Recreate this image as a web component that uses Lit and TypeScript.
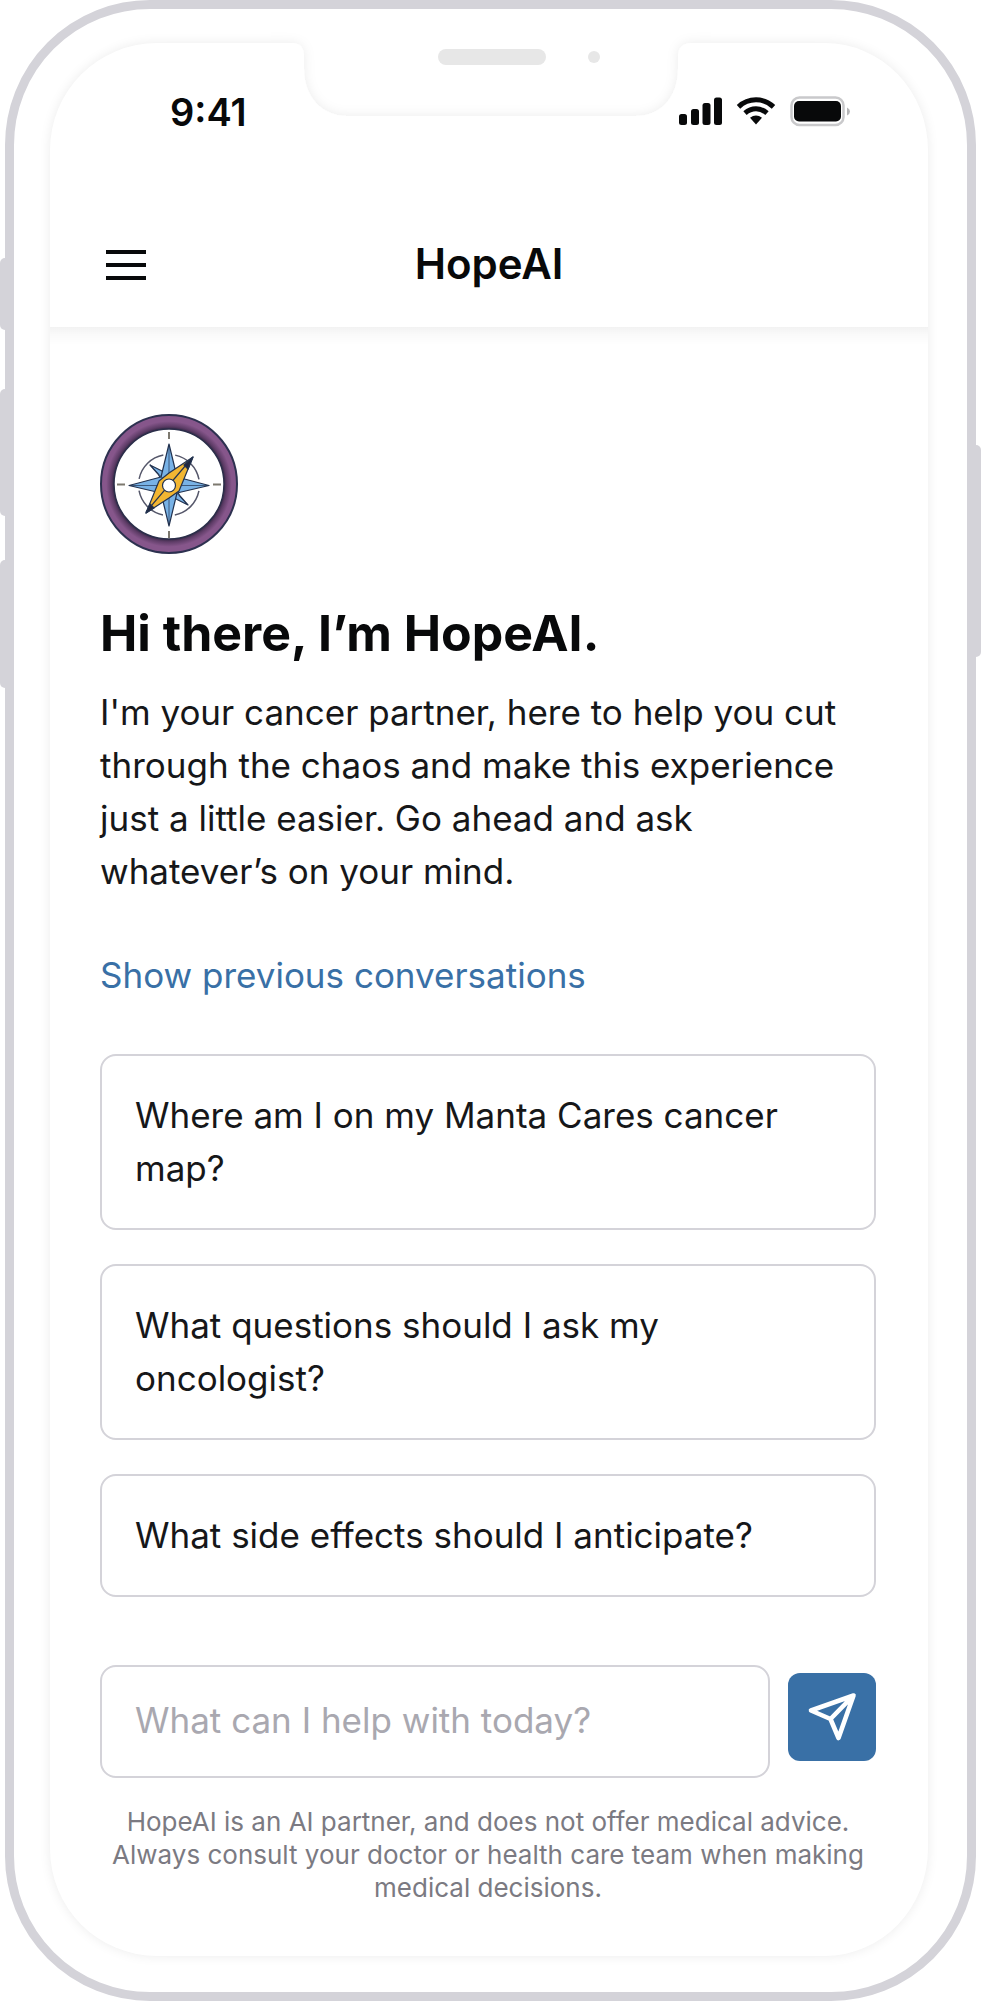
import { LitElement, html, css } from "lit";
import { customElement, state } from "lit/decorators.js";

const SUGGESTIONS = [
  "Where am I on my Manta Cares cancer map?",
  "What questions should I ask my oncologist?",
  "What side effects should I anticipate?",
];

const notch = html`<svg class="notch" viewBox="0 0 440 120" aria-hidden="true">
  <defs>
    <filter id="edge" x="-20%" y="-30%" width="140%" height="160%">
      <feDropShadow dx="0" dy="0" stdDeviation="6" flood-color="#000" flood-opacity="0.08" />
    </filter>
  </defs>
  <rect width="440" height="120" fill="#fff" />
  <path
    filter="url(#edge)"
    fill="#fff"
    d="M-40 34H21Q33 34 33 48V60C33 88 51 107 76 107H365C390 107 407 88 407 60V48Q407 34 421 34H480V160H-40Z"
  />
  <rect x="167" y="40" width="108" height="16" rx="8" fill="#e7e7e7" />
  <circle cx="323" cy="48" r="6" fill="#e7e7e7" />
</svg>`;

const statusIcons = html`<svg width="172" height="32" viewBox="0 0 172 32" aria-hidden="true">
  <g fill="#08090a">
    <rect x="0" y="18" width="8" height="11" rx="2.5" />
    <rect x="12" y="13" width="8" height="16" rx="2.5" />
    <rect x="23.5" y="7" width="8" height="22" rx="2.5" />
    <rect x="35" y="1.5" width="8" height="27.5" rx="2.5" />
    <path d="M77 28.5 71 21.8Q77 17 83 21.8Z" />
  </g>
  <g fill="none" stroke="#08090a" stroke-width="5">
    <path d="M59.5 10.8Q67 3.8 77 3.8T94.500 10.8" />
    <path d="M66 17.2Q71 12.8 77 12.8T88 17.2" />
  </g>
  <rect x="112.5" y="1.5" width="52" height="27.500" rx="8" fill="#fff" stroke="#c9c9cb" stroke-width="2.5" />
  <rect x="115" y="5" width="47" height="20.500" rx="5" fill="#08090a" />
  <path d="M168 11.500v8q3-1.500 3-4t-3-4Z" fill="#b5b5b7" />
</svg>`;

const compass = html`<svg class="compass" width="138" height="140" viewBox="0 0 138 140" role="img" aria-label="Compass">
  <defs>
    <radialGradient id="ring" gradientUnits="userSpaceOnUse" cx="69" cy="70" r="69">
      <stop offset="0.8" stop-color="#3a2a49" />
      <stop offset="0.84" stop-color="#5f3d68" />
      <stop offset="0.91" stop-color="#86568b" />
      <stop offset="1" stop-color="#86568b" />
    </radialGradient>
  </defs>
  <ellipse cx="69" cy="70" rx="68" ry="69" fill="url(#ring)" stroke="#2d3150" stroke-width="2" />
  <circle cx="69" cy="70" r="55" fill="#fff" stroke="#2b2e4a" stroke-width="1.5" />
  <circle cx="69" cy="71" r="30.5" fill="none" stroke="#55576a" stroke-width="1.5" stroke-dasharray="36 11.91" stroke-dashoffset="-6" />
  <path d="M69 18v7M69 117v7M17 70.500h8M113 70.500h8" stroke="#7d796f" stroke-width="2" />
  <g stroke="#22324f" stroke-width="1.2" stroke-linejoin="round">
    <path fill="#78b2e6" d="M50 51 66 59 80 82 88 91 72 83 58 60Z" />
    <path fill="#78b2e6" d="M69 30 77 63 109 71.500 77 79 69 112 61 79 29 71.500 61 63Z" />
    <path fill="none" d="M69 32V110M31 71.500H107M50 51 88 91" stroke-width="0.7" />
    <path fill="#f2b632" d="M93 43 79 77 69 84 46 99 59 67 69 59Z" />
    <path fill="none" d="M92 44 46 98" />
    <path fill="#22263c" d="M93 43 84 51 88 55ZM46 99 50 90 54 94Z" />
    <circle cx="69" cy="71.500" r="6.500" fill="#fff" />
  </g>
</svg>`;

@customElement("app-root")
export class AppRoot extends LitElement {
  @state() private draft = "";

  static styles = css`
    :host {
      display: block;
      font-family: Inter, "Liberation Sans", sans-serif;
      color: #08090a;
      background: #fff;
    }
    * {
      box-sizing: border-box;
    }
    button,
    input {
      font: inherit;
      color: inherit;
      margin: 0;
    }
    .device {
      position: relative;
      padding: 0 5px;
    }
    .side-button {
      position: absolute;
      width: 10px;
      border-radius: 5px;
      background: #d4d3d9;
    }
    .mute { left: 0; top: 258px; height: 72px; }
    .volume-up { left: 0; top: 389px; height: 127px; }
    .volume-down { left: 0; top: 560px; height: 128px; }
    .power { right: 0; top: 445px; height: 212px; }
    .frame {
      position: relative;
      padding: 34px 39px 36px 36px;
      border: 9px solid #d4d3d9;
      border-radius: 145px;
      background: #fff;
    }
    .screen {
      position: relative;
      border-radius: 107px 103px 103px 107px / 107px;
      background: #fff;
      box-shadow: 0 0 12px rgba(0, 0, 0, 0.08);
    }
    .notch {
      position: absolute;
      top: -34px;
      left: 50%;
      width: 440px;
      height: 120px;
      margin-left: -218px;
      overflow: hidden;
    }
    .top {
      padding: 47px 56px 39px;
    }
    .status {
      position: relative;
      display: flex;
      justify-content: space-between;
      align-items: center;
      padding: 0 21px 0 64px;
    }
    .time {
      font-size: 38px;
      line-height: 44px;
      font-weight: 600;
    }
    .nav {
      display: grid;
      grid-template-columns: 40px 1fr 40px;
      align-items: center;
      margin-top: 106px;
    }
    .menu {
      display: flex;
      padding: 0;
      border: 0;
      background: none;
    }
    .title {
      margin: 0;
      font-size: 42px;
      line-height: 48px;
      font-weight: 600;
      text-align: center;
    }
    .content {
      padding: 87px 52px 52px 50px;
      border-radius: 0 0 103px 107px;
      background: linear-gradient(rgba(0, 0, 0, 0.05), rgba(0, 0, 0, 0.02) 8px, transparent 18px);
      color: #161719;
      font-size: 35px;
      line-height: 53px;
    }
    .compass {
      display: block;
    }
    .greeting {
      margin: 50px 0 24px;
      color: #08090a;
      font-size: 50px;
      line-height: 58px;
      font-weight: 700;
    }
    .intro {
      margin: 0;
    }
    .history {
      display: block;
      margin: 51px 0 52px;
      color: #3970a6;
      text-decoration: none;
    }
    .suggestions {
      display: grid;
      gap: 34px;
    }
    .suggestion {
      padding: 33px;
      border: 2px solid #d4d3d9;
      border-radius: 16px;
      background: #fff;
      text-align: left;
    }
    .composer {
      display: flex;
      align-items: flex-start;
      gap: 18px;
      margin-top: 68px;
    }
    .prompt {
      flex: 1;
      min-width: 0;
      height: 113px;
      padding: 0 33px 4px;
      border: 2px solid #d4d3d9;
      border-radius: 16px;
      background: #fff;
    }
    .prompt::placeholder {
      color: #a9a8b0;
      opacity: 1;
    }
    .send {
      display: grid;
      place-items: center;
      width: 88px;
      height: 88px;
      margin-top: 8px;
      padding: 0;
      border: 0;
      border-radius: 12px;
      background: #3970a6;
    }
    .disclaimer {
      margin: 27px 0 0;
      font-size: 26px;
      line-height: 33px;
      text-align: center;
      color: #7b7a82;
    }
  `;

  private onInput(event: InputEvent) {
    this.draft = (event.target as HTMLInputElement).value;
  }

  private choose(text: string) {
    this.draft = text;
  }

  render() {
    return html`
      <div class="device">
        <span class="side-button mute"></span>
        <span class="side-button volume-up"></span>
        <span class="side-button volume-down"></span>
        <span class="side-button power"></span>
        <div class="frame">
          <div class="screen">
            ${notch}
            <header class="top">
              <div class="status">
                <span class="time">9:41</span>
                ${statusIcons}
              </div>
              <div class="nav">
                <button class="menu" aria-label="Open menu">
                  <svg width="40" height="32" viewBox="0 0 40 32" aria-hidden="true">
                    <path d="M0 4H40M0 17H40M0 30H40" stroke="#08090a" stroke-width="4" />
                  </svg>
                </button>
                <h2 class="title">HopeAI</h2>
              </div>
            </header>
            <main class="content">
              ${compass}
              <h1 class="greeting">Hi there, I’m HopeAI.</h1>
              <p class="intro">
                I'm your cancer partner, here to help you cut through the chaos and make this
                experience just a little easier. Go ahead and ask whatever’s on your mind.
              </p>
              <a class="history" href="#history">Show previous conversations</a>
              <div class="suggestions">
                ${SUGGESTIONS.map(
                  (text) => html`<button class="suggestion" @click=${() => this.choose(text)}>${text}</button>`
                )}
              </div>
              <form class="composer" @submit=${(e: Event) => e.preventDefault()}>
                <input
                  class="prompt"
                  type="text"
                  aria-label="Your question"
                  placeholder="What can I help with today?"
                  .value=${this.draft}
                  @input=${this.onInput}
                />
                <button class="send" aria-label="Send">
                  <svg width="50" height="50" viewBox="0 0 50 50" aria-hidden="true">
                    <path
                      d="M46.500 3.500 4 18.500 23.500 27 31.500 46ZM46.500 3.500 23.500 27"
                      fill="none"
                      stroke="#fff"
                      stroke-width="4.600"
                      stroke-linejoin="round"
                    />
                  </svg>
                </button>
              </form>
              <p class="disclaimer">
                HopeAI is an AI partner, and does not offer medical advice. Always consult your
                doctor or health care team when making medical decisions.
              </p>
            </main>
          </div>
        </div>
      </div>
    `;
  }
}
